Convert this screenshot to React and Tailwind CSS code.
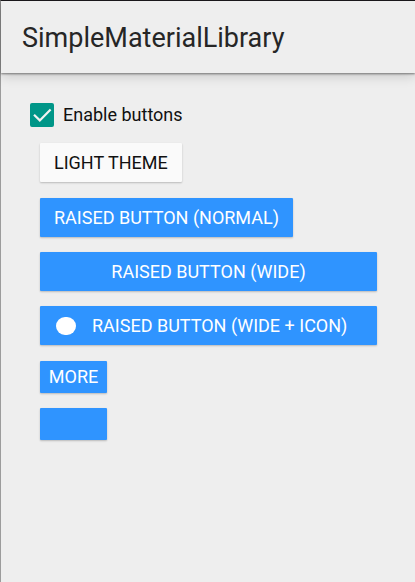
import { useState } from 'react';

const raised =
  'flex items-center rounded-[1px] bg-[#2f94ff] text-[18px] leading-6 text-white shadow-[0_1px_2px_rgba(0,0,0,0.22)]';

function RaisedButton({ className, children, ...props }) {
  return (
    <button type="button" className={`${raised} ${className}`} {...props}>
      {children}
    </button>
  );
}

export default function App() {
  const [enabled, setEnabled] = useState(true);

  return (
    <div className="min-h-screen border-t border-l border-t-[#1c1a1d] border-l-[#9c9c9c] bg-[#eeeeee] font-[Roboto,sans-serif] text-[#111111]">
      <header className="flex h-18 items-center bg-[#eeeeee] px-[21px] pt-px shadow-[0_1px_2px_rgba(0,0,0,0.45),0_2px_12px_rgba(0,0,0,0.2)]">
        <h1 className="text-[27px] leading-8 text-[#262626]">SimpleMaterialLibrary</h1>
      </header>

      <main className="pt-7">
        <div className="flex h-7 items-center gap-[9px] pl-[29px]">
          <span className="grid size-6">
            <input
              id="enable"
              type="checkbox"
              checked={enabled}
              onChange={(e) => setEnabled(e.target.checked)}
              className="col-start-1 row-start-1 size-6 appearance-none rounded-[2px] border-2 border-[#009688] checked:bg-[#009688]"
            />
            {enabled && (
              <svg
                viewBox="0 0 24 24"
                className="pointer-events-none col-start-1 row-start-1 size-6"
                fill="none"
                stroke="#f2f2f2"
                strokeWidth="2.2"
                aria-hidden="true"
              >
                <path d="M4 11.8 9.8 17.4 20.6 6.4" />
              </svg>
            )}
          </span>
          <label htmlFor="enable" className="text-[18px] leading-6">
            Enable buttons
          </label>
        </div>

        <div className="mt-[14px] flex flex-col gap-4 pr-[38px] pl-[39px]">
          <button
            type="button"
            disabled={!enabled}
            className="flex h-[39px] items-center self-start rounded-[1px] bg-[#fafafa] px-[14px] text-[18px] leading-6 shadow-[0_1px_2px_rgba(0,0,0,0.22)]"
          >
            LIGHT THEME
          </button>
          <div className="flex flex-col items-start gap-[15px]">
            <RaisedButton disabled={!enabled} className="h-[39px] px-[14px]">
              RAISED BUTTON (NORMAL)
            </RaisedButton>
            <RaisedButton disabled={!enabled} className="h-[39px] w-full justify-center px-[14px]">
              RAISED BUTTON (WIDE)
            </RaisedButton>
            <RaisedButton disabled={!enabled} className="h-[39px] w-full gap-4 px-4">
              <span className="h-[18px] w-5 rounded-full bg-white" />
              RAISED BUTTON (WIDE + ICON)
            </RaisedButton>
          </div>
          <div className="flex flex-col items-start gap-[15px]">
            <RaisedButton disabled={!enabled} className="h-8 w-[67px] justify-center">
              MORE
            </RaisedButton>
            <RaisedButton disabled={!enabled} className="h-8 w-[67px]" />
          </div>
        </div>
      </main>
    </div>
  );
}
